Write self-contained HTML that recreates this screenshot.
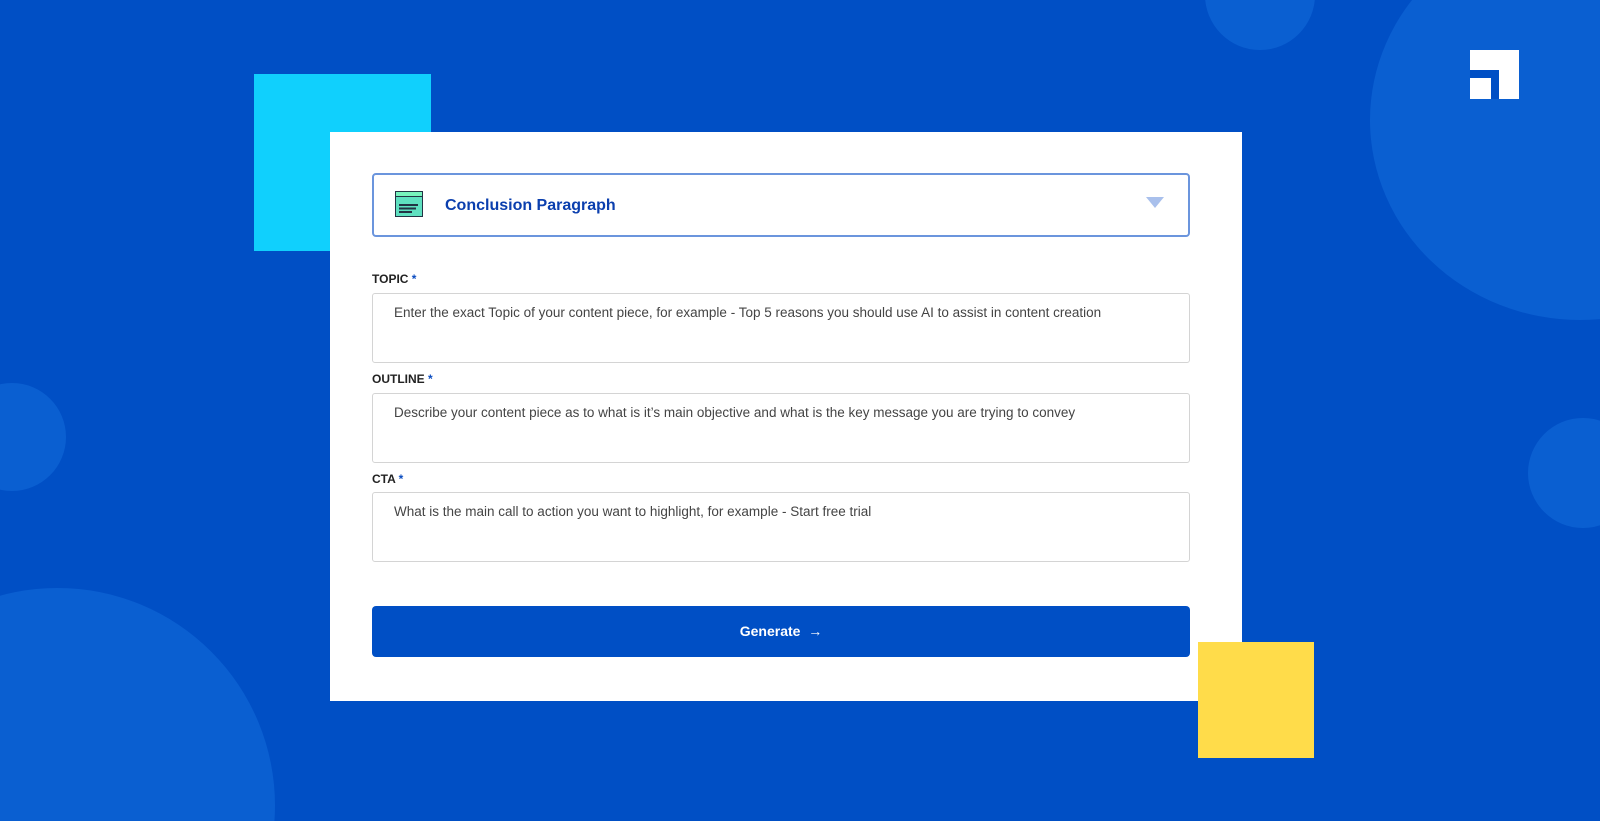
<!DOCTYPE html>
<html><head><meta charset="utf-8"><style>
*{margin:0;padding:0;box-sizing:border-box}
html,body{width:1600px;height:821px;overflow:hidden;background:#004fc5}
#w{position:relative;width:1600px;height:821px;overflow:hidden;background:#004fc5;font-family:"Liberation Sans",sans-serif}
.c{position:absolute;border-radius:50%;background:#0a5fd1}
.card{position:absolute;left:330px;top:132px;width:912px;height:569px;background:#fff}
.sel{position:absolute;left:42px;top:41px;width:818px;height:64px;border:2px solid #6b95dd;border-radius:4px}
.sel .t{position:absolute;left:71px;top:22px;font-size:16px;font-weight:bold;color:#0b3fae}
.lab{position:absolute;left:42px;font-size:12px;font-weight:bold;color:#222}
.lab span{color:#0b4cc0}
.box{position:absolute;left:42px;width:818px;height:70px;border:1px solid #d4d4d4;border-radius:3px;font-size:13.5px;color:#444;padding:11px 21px}
.btn{position:absolute;left:42px;top:474px;width:818px;height:51px;background:#004fc5;border-radius:4px;color:#fff;font-weight:bold;font-size:14px;text-align:center;line-height:51px}
</style></head><body><div id="w">
<div class="c" style="left:1370px;top:-80px;width:420px;height:400px"></div>
<div class="c" style="left:1205px;top:-60px;width:110px;height:110px"></div>
<div class="c" style="left:-42px;top:383px;width:108px;height:108px"></div>
<div class="c" style="left:1528px;top:418px;width:110px;height:110px"></div>
<div class="c" style="left:-160px;top:588px;width:435px;height:435px"></div>
<div style="position:absolute;left:254px;top:74px;width:177px;height:177px;background:#10d0fd"></div>
<div class="card">
<div class="sel">
<svg style="position:absolute;left:21px;top:16px" width="28" height="26" viewBox="0 0 28 26"><rect x="0.5" y="0.5" width="27" height="25" fill="#5fe0c0" stroke="#234" /><rect x="1" y="1" width="26" height="4" fill="#8fb" opacity=".6"/><line x1="1" y1="5.5" x2="27" y2="5.5" stroke="#234"/><rect x="4" y="13" width="19" height="2" fill="#234"/><rect x="4" y="16.5" width="17" height="2" fill="#234"/><rect x="4" y="20" width="13" height="2" fill="#234"/></svg>
<div class="t">Conclusion Paragraph</div>
<svg style="position:absolute;left:772px;top:22px" width="18" height="12"><path d="M0 0H18L9 11Z" fill="#a9c0ec"/></svg>
</div>
<div class="lab" style="top:140px">TOPIC <span>*</span></div>
<div class="box" style="top:161px">Enter the exact Topic of your content piece, for example - Top 5 reasons you should use AI to assist in content creation</div>
<div class="lab" style="top:240px">OUTLINE <span>*</span></div>
<div class="box" style="top:261px">Describe your content piece as to what is it’s main objective and what is the key message you are trying to convey</div>
<div class="lab" style="top:340px">CTA <span>*</span></div>
<div class="box" style="top:360px">What is the main call to action you want to highlight, for example - Start free trial</div>
<div class="btn">Generate &nbsp;→</div>
</div>
<div style="position:absolute;left:1198px;top:642px;width:116px;height:116px;background:#ffdc4a"></div>
<div style="position:absolute;left:1470px;top:50px;width:49px;height:49px;background:#fff"></div>
<div style="position:absolute;left:1470px;top:70px;width:29px;height:8px;background:#004fc5"></div>
<div style="position:absolute;left:1491px;top:70px;width:8px;height:29px;background:#004fc5"></div>
</div></body></html>
